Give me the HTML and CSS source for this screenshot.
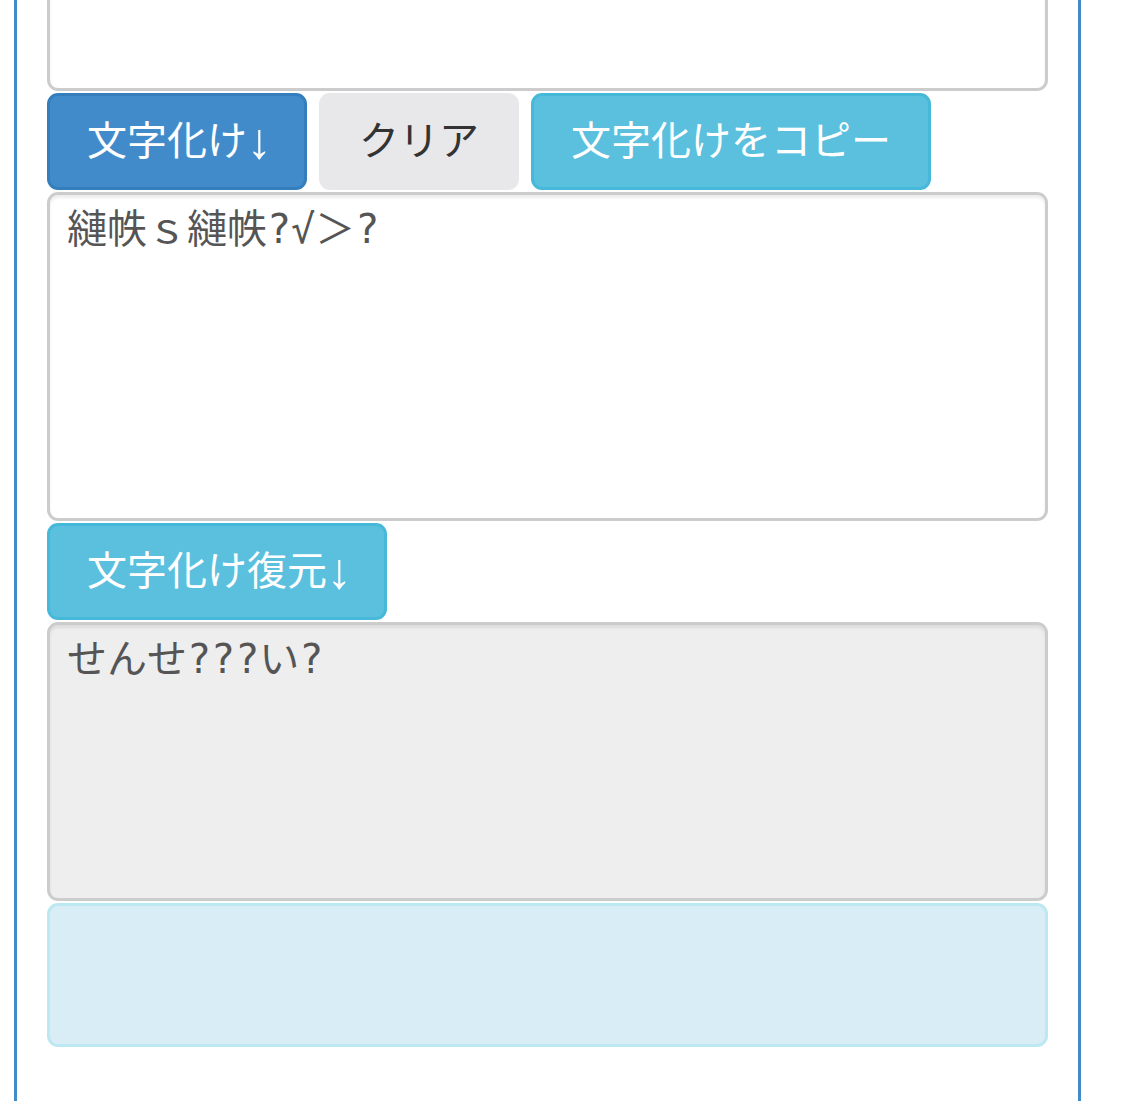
FILE: index.html
```html
<!DOCTYPE html>
<html lang="ja">
<head>
    <meta charset="UTF-8">
    <meta name="viewport" content="width=device-width, initial-scale=1.0">
    <title>文字化け</title>
    <link rel="stylesheet" href="styles.css">
</head>
<body>
    <div class="container">
        <form class="mojibake-form">
            <textarea class="form-control" id="source" rows="5">せんせい</textarea>

            <div class="btn-row">
                <button type="button" class="btn btn-primary">文字化け<span class="arrow">↓</span></button>
                <button type="button" class="btn btn-default">クリア</button>
                <button type="button" class="btn btn-info">文字化けをコピー</button>
            </div>

            <textarea class="form-control" id="garbled" rows="5">縺帙ｓ縺帙?√＞?</textarea>

            <div class="btn-row">
                <button type="button" class="btn btn-info">文字化け復元<span class="arrow">↓</span></button>
            </div>

            <textarea class="form-control form-control-short" id="restored" rows="4" readonly>せんせ???い?</textarea>

            <div class="alert alert-info"></div>
        </form>
    </div>
</body>
</html>
```

FILE: styles.css
```css
body {
    font-family: Roboto, "Noto Sans CJK JP", sans-serif;
    background-color: #fff;
    margin: 0;
    padding: 0;
}

.container {
    margin: -238px 0 0 14px;
    width: 1067px;
    padding: 0 30px 120px;
    border-left: 3px solid #428bca;
    border-right: 3px solid #428bca;
    box-sizing: border-box;
}

.mojibake-form {
    display: flex;
    flex-direction: column;
    gap: 2px;
}

.form-control {
    display: block;
    width: 100%;
    height: 329px;
    padding: 6px 17px;
    font-family: "DejaVu Sans Mono", "Noto Sans CJK JP", monospace;
    font-size: 40px;
    line-height: 57px;
    color: #555;
    background-color: #fff;
    border: 3px solid #ccc;
    border-radius: 11px;
    box-shadow: inset 0 3px 3px rgba(0, 0, 0, 0.075);
    box-sizing: border-box;
    resize: none;
    outline: none;
}

.form-control[readonly] {
    background-color: #eee;
}

.form-control-short {
    height: 279px;
}

.btn-row {
    display: flex;
    gap: 12px;
}

.btn {
    display: inline-block;
    padding: 17px 37px;
    font-family: inherit;
    font-size: 40px;
    line-height: 57px;
    border: 3px solid transparent;
    border-radius: 11px;
    cursor: pointer;
}

.arrow {
    display: inline-block;
    width: 20px;
    font-family: "Liberation Sans", sans-serif;
    font-size: 50px;
    line-height: 0;
    vertical-align: -3px;
}

.btn-primary {
    color: #fff;
    background-color: #428bca;
    border-color: #357ebd;
}

.btn-default {
    color: #333;
    background-color: #e8e8ea;
    border-color: #e8e8ea;
}

.btn-info {
    color: #fff;
    background-color: #5bc0de;
    border-color: #46b8da;
}

.alert {
    height: 144px;
    border: 3px solid transparent;
    border-radius: 11px;
    box-sizing: border-box;
}

.alert-info {
    background-color: #d9edf7;
    border-color: #bce8f1;
}
```
